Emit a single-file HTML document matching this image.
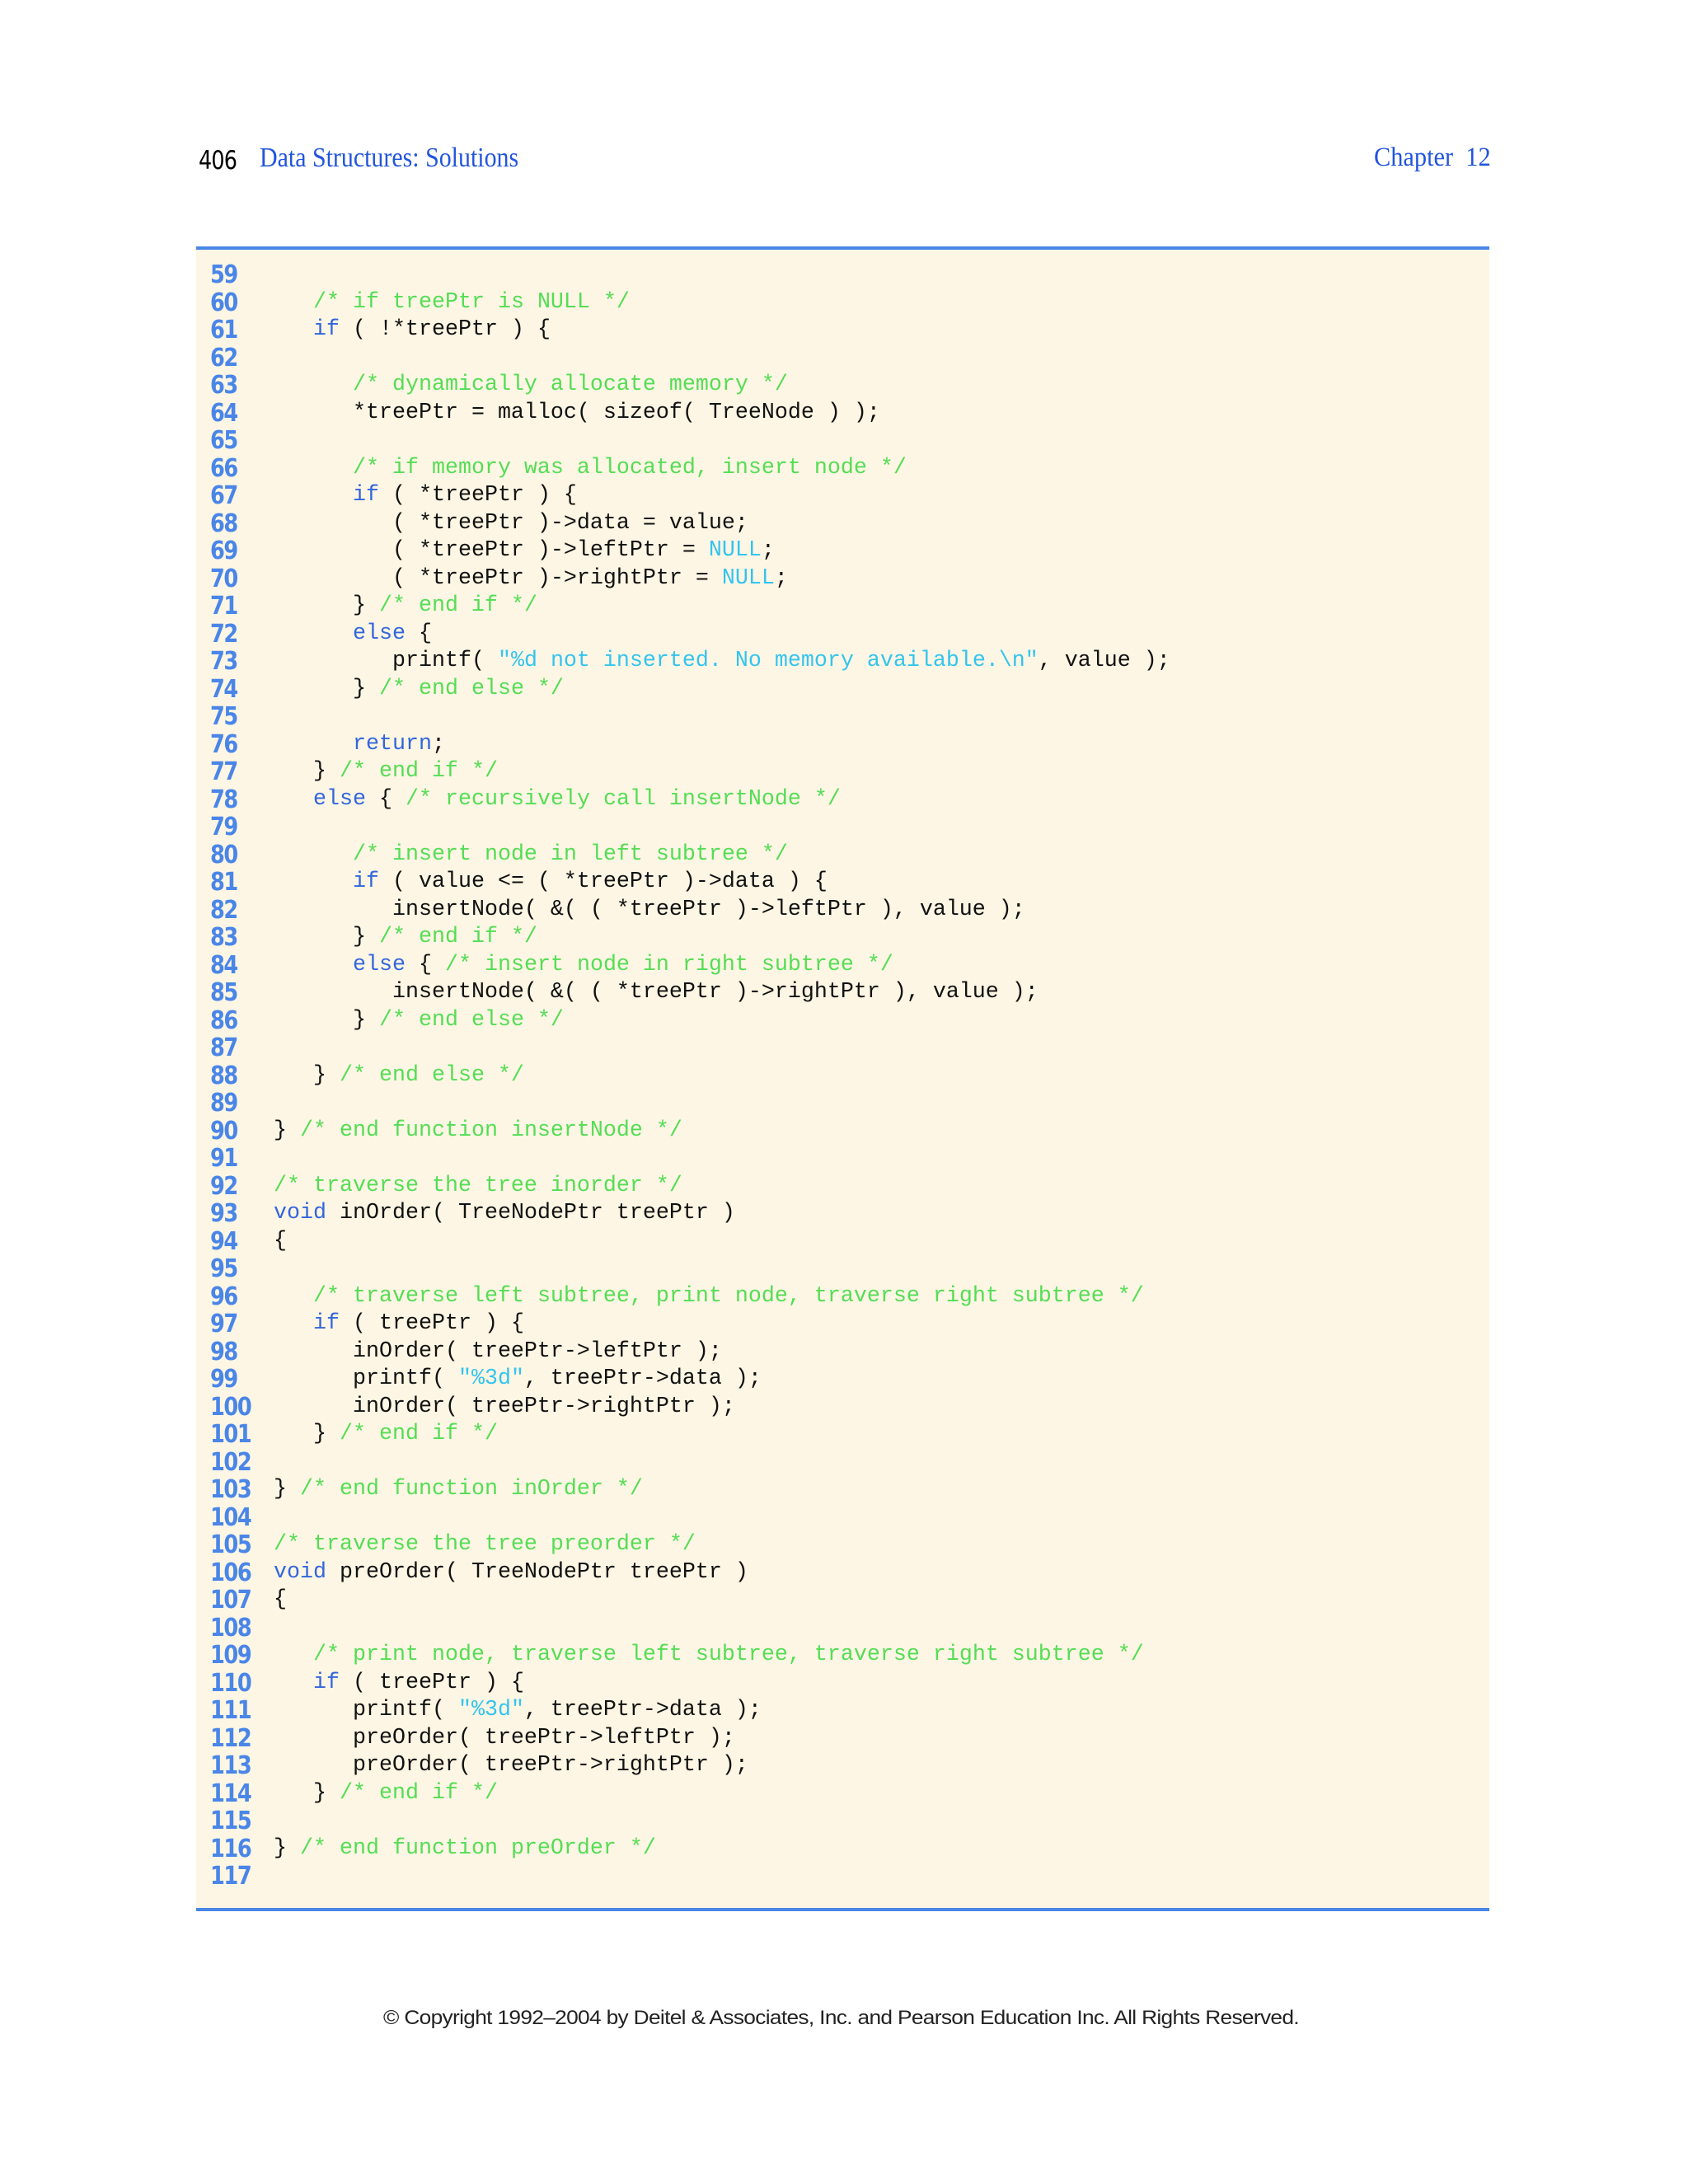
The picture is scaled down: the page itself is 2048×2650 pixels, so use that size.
<!DOCTYPE html>
<html><head><meta charset="utf-8"><style>
html,body{margin:0;padding:0;background:#fff;}
body{width:2048px;height:2650px;position:relative;overflow:hidden;}
.pg{position:absolute;left:241px;top:177px;font-family:"DejaVu Sans","Liberation Sans",sans-serif;font-size:31px;color:#000;letter-spacing:-1px;transform:scaleX(0.82);transform-origin:left top;}
.ttl{position:absolute;left:315px;top:173px;font-family:"Liberation Serif",serif;font-size:34px;color:#2255dd;transform:scaleX(0.88);transform-origin:left top;white-space:nowrap;}
.ch{position:absolute;left:1667px;top:173px;font-family:"Liberation Serif",serif;font-size:33px;color:#2255dd;white-space:pre;transform:scaleX(0.92);transform-origin:left top;}
.panel{position:absolute;left:238px;top:299px;width:1569px;height:2020px;background:#fdf6e4;border-top:4px solid #4a86e8;border-bottom:4px solid #4a86e8;box-sizing:border-box;}
.code{position:absolute;left:0;top:317px;width:2048px;}
.l{height:33.5px;line-height:33.5px;position:relative;white-space:pre;}
.n{position:absolute;left:255px;top:0;font-family:"DejaVu Sans Condensed","Liberation Sans Narrow","Liberation Sans",sans-serif;font-weight:bold;font-size:30px;color:#4a86e8;letter-spacing:-1.5px;transform:scaleX(0.95);transform-origin:left top;}
.t{position:absolute;left:332px;top:0;font-family:"Liberation Mono",monospace;font-size:26.67px;color:#111;}
.k{color:#3366dd}.c{color:#55dd55}.s{color:#33c4ee}
.cp{position:absolute;left:465px;top:2435px;font-family:"Liberation Sans",sans-serif;font-size:24px;color:#222;white-space:nowrap;letter-spacing:-0.6px;transform:scaleX(1.094);transform-origin:left top;}
</style></head><body>
<div class="pg">406</div>
<div class="ttl">Data Structures: Solutions</div>
<div class="ch">Chapter  12</div>
<div class="panel"></div>
<div class="code">
<div class="l"><span class="n">59</span><span class="t"></span></div>
<div class="l"><span class="n">60</span><span class="t">   <span class="c">/* if treePtr is NULL */</span></span></div>
<div class="l"><span class="n">61</span><span class="t">   <span class="k">if</span> ( !*treePtr ) {</span></div>
<div class="l"><span class="n">62</span><span class="t"></span></div>
<div class="l"><span class="n">63</span><span class="t">      <span class="c">/* dynamically allocate memory */</span></span></div>
<div class="l"><span class="n">64</span><span class="t">      *treePtr = malloc( sizeof( TreeNode ) );</span></div>
<div class="l"><span class="n">65</span><span class="t"></span></div>
<div class="l"><span class="n">66</span><span class="t">      <span class="c">/* if memory was allocated, insert node */</span></span></div>
<div class="l"><span class="n">67</span><span class="t">      <span class="k">if</span> ( *treePtr ) {</span></div>
<div class="l"><span class="n">68</span><span class="t">         ( *treePtr )-&gt;data = value;</span></div>
<div class="l"><span class="n">69</span><span class="t">         ( *treePtr )-&gt;leftPtr = <span class="s">NULL</span>;</span></div>
<div class="l"><span class="n">70</span><span class="t">         ( *treePtr )-&gt;rightPtr = <span class="s">NULL</span>;</span></div>
<div class="l"><span class="n">71</span><span class="t">      } <span class="c">/* end if */</span></span></div>
<div class="l"><span class="n">72</span><span class="t">      <span class="k">else</span> {</span></div>
<div class="l"><span class="n">73</span><span class="t">         printf( <span class="s">"%d not inserted. No memory available.\n"</span>, value );</span></div>
<div class="l"><span class="n">74</span><span class="t">      } <span class="c">/* end else */</span></span></div>
<div class="l"><span class="n">75</span><span class="t"></span></div>
<div class="l"><span class="n">76</span><span class="t">      <span class="k">return</span>;</span></div>
<div class="l"><span class="n">77</span><span class="t">   } <span class="c">/* end if */</span></span></div>
<div class="l"><span class="n">78</span><span class="t">   <span class="k">else</span> { <span class="c">/* recursively call insertNode */</span></span></div>
<div class="l"><span class="n">79</span><span class="t"></span></div>
<div class="l"><span class="n">80</span><span class="t">      <span class="c">/* insert node in left subtree */</span></span></div>
<div class="l"><span class="n">81</span><span class="t">      <span class="k">if</span> ( value &lt;= ( *treePtr )-&gt;data ) {</span></div>
<div class="l"><span class="n">82</span><span class="t">         insertNode( &amp;( ( *treePtr )-&gt;leftPtr ), value );</span></div>
<div class="l"><span class="n">83</span><span class="t">      } <span class="c">/* end if */</span></span></div>
<div class="l"><span class="n">84</span><span class="t">      <span class="k">else</span> { <span class="c">/* insert node in right subtree */</span></span></div>
<div class="l"><span class="n">85</span><span class="t">         insertNode( &amp;( ( *treePtr )-&gt;rightPtr ), value );</span></div>
<div class="l"><span class="n">86</span><span class="t">      } <span class="c">/* end else */</span></span></div>
<div class="l"><span class="n">87</span><span class="t"></span></div>
<div class="l"><span class="n">88</span><span class="t">   } <span class="c">/* end else */</span></span></div>
<div class="l"><span class="n">89</span><span class="t"></span></div>
<div class="l"><span class="n">90</span><span class="t">} <span class="c">/* end function insertNode */</span></span></div>
<div class="l"><span class="n">91</span><span class="t"></span></div>
<div class="l"><span class="n">92</span><span class="t"><span class="c">/* traverse the tree inorder */</span></span></div>
<div class="l"><span class="n">93</span><span class="t"><span class="k">void</span> inOrder( TreeNodePtr treePtr )</span></div>
<div class="l"><span class="n">94</span><span class="t">{</span></div>
<div class="l"><span class="n">95</span><span class="t"></span></div>
<div class="l"><span class="n">96</span><span class="t">   <span class="c">/* traverse left subtree, print node, traverse right subtree */</span></span></div>
<div class="l"><span class="n">97</span><span class="t">   <span class="k">if</span> ( treePtr ) {</span></div>
<div class="l"><span class="n">98</span><span class="t">      inOrder( treePtr-&gt;leftPtr );</span></div>
<div class="l"><span class="n">99</span><span class="t">      printf( <span class="s">"%3d"</span>, treePtr-&gt;data );</span></div>
<div class="l"><span class="n">100</span><span class="t">      inOrder( treePtr-&gt;rightPtr );</span></div>
<div class="l"><span class="n">101</span><span class="t">   } <span class="c">/* end if */</span></span></div>
<div class="l"><span class="n">102</span><span class="t"></span></div>
<div class="l"><span class="n">103</span><span class="t">} <span class="c">/* end function inOrder */</span></span></div>
<div class="l"><span class="n">104</span><span class="t"></span></div>
<div class="l"><span class="n">105</span><span class="t"><span class="c">/* traverse the tree preorder */</span></span></div>
<div class="l"><span class="n">106</span><span class="t"><span class="k">void</span> preOrder( TreeNodePtr treePtr )</span></div>
<div class="l"><span class="n">107</span><span class="t">{</span></div>
<div class="l"><span class="n">108</span><span class="t"></span></div>
<div class="l"><span class="n">109</span><span class="t">   <span class="c">/* print node, traverse left subtree, traverse right subtree */</span></span></div>
<div class="l"><span class="n">110</span><span class="t">   <span class="k">if</span> ( treePtr ) {</span></div>
<div class="l"><span class="n">111</span><span class="t">      printf( <span class="s">"%3d"</span>, treePtr-&gt;data );</span></div>
<div class="l"><span class="n">112</span><span class="t">      preOrder( treePtr-&gt;leftPtr );</span></div>
<div class="l"><span class="n">113</span><span class="t">      preOrder( treePtr-&gt;rightPtr );</span></div>
<div class="l"><span class="n">114</span><span class="t">   } <span class="c">/* end if */</span></span></div>
<div class="l"><span class="n">115</span><span class="t"></span></div>
<div class="l"><span class="n">116</span><span class="t">} <span class="c">/* end function preOrder */</span></span></div>
<div class="l"><span class="n">117</span><span class="t"></span></div>
</div>
<div class="cp">© Copyright 1992–2004 by Deitel &amp; Associates, Inc. and Pearson Education Inc. All Rights Reserved.</div>
</body></html>
